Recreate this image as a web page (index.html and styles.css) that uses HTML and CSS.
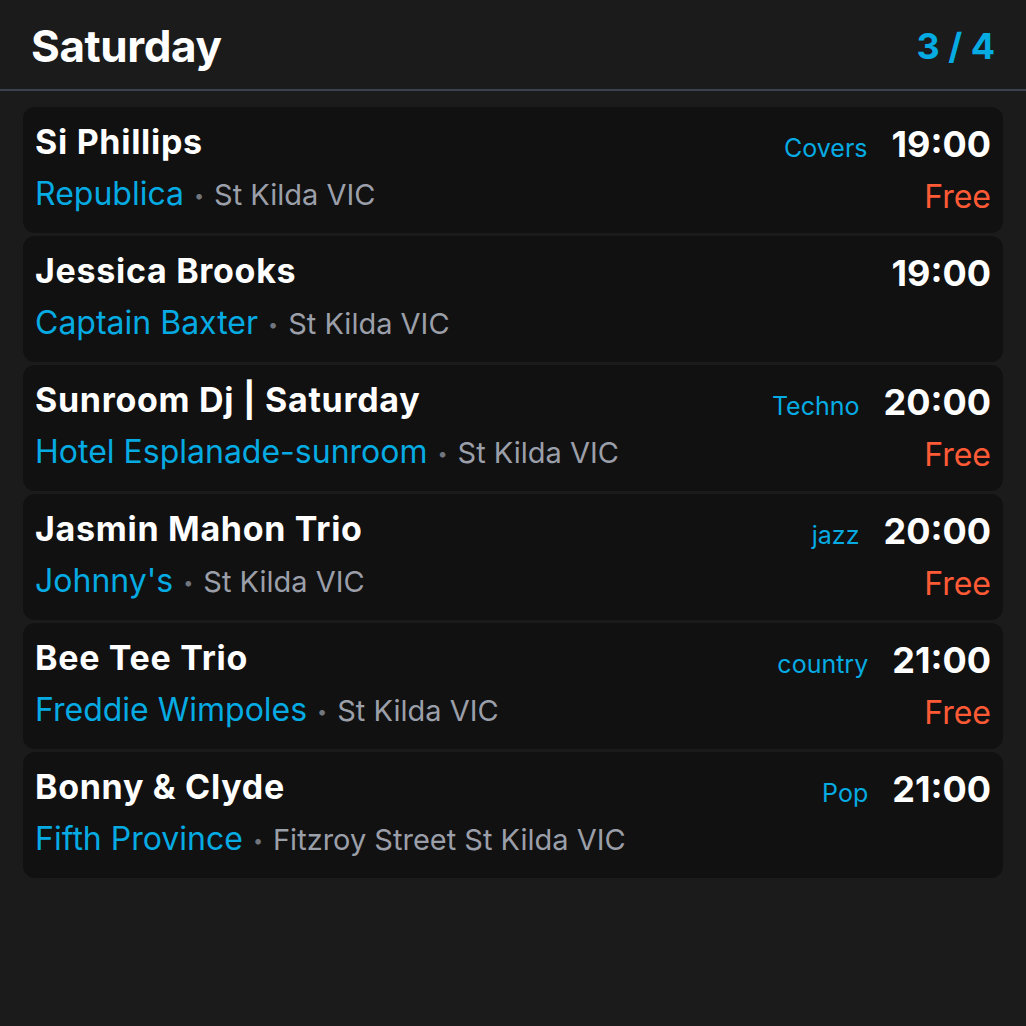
FILE: index.html
```html
<!DOCTYPE html>
<html>
<head>
<meta charset="utf-8">
<link rel="stylesheet" href="styles.css">
</head>
<body>
<header class="header">
  <h1 class="day">Saturday</h1>
  <div class="pager">3 / 4</div>
</header>
<main class="list">
  <div class="card">
    <div class="info">
      <div class="artist">Si Phillips</div>
      <div class="venue-line"><span class="venue">Republica</span><span class="dot">•</span><span class="place">St Kilda VIC</span></div>
    </div>
    <div class="meta">
      <div class="top"><span class="genre">Covers</span><span class="time">19:00</span></div>
      <div class="price">Free</div>
    </div>
  </div>
  <div class="card">
    <div class="info">
      <div class="artist">Jessica Brooks</div>
      <div class="venue-line"><span class="venue">Captain Baxter</span><span class="dot">•</span><span class="place">St Kilda VIC</span></div>
    </div>
    <div class="meta">
      <div class="top"><span class="time">19:00</span></div>
    </div>
  </div>
  <div class="card">
    <div class="info">
      <div class="artist">Sunroom Dj | Saturday</div>
      <div class="venue-line"><span class="venue">Hotel Esplanade-sunroom</span><span class="dot">•</span><span class="place">St Kilda VIC</span></div>
    </div>
    <div class="meta">
      <div class="top"><span class="genre">Techno</span><span class="time">20:00</span></div>
      <div class="price">Free</div>
    </div>
  </div>
  <div class="card">
    <div class="info">
      <div class="artist">Jasmin Mahon Trio</div>
      <div class="venue-line"><span class="venue">Johnny's</span><span class="dot">•</span><span class="place">St Kilda VIC</span></div>
    </div>
    <div class="meta">
      <div class="top"><span class="genre">jazz</span><span class="time">20:00</span></div>
      <div class="price">Free</div>
    </div>
  </div>
  <div class="card">
    <div class="info">
      <div class="artist">Bee Tee Trio</div>
      <div class="venue-line"><span class="venue">Freddie Wimpoles</span><span class="dot">•</span><span class="place">St Kilda VIC</span></div>
    </div>
    <div class="meta">
      <div class="top"><span class="genre">country</span><span class="time">21:00</span></div>
      <div class="price">Free</div>
    </div>
  </div>
  <div class="card">
    <div class="info">
      <div class="artist">Bonny &amp; Clyde</div>
      <div class="venue-line"><span class="venue">Fifth Province</span><span class="dot">•</span><span class="place">Fitzroy Street St Kilda VIC</span></div>
    </div>
    <div class="meta">
      <div class="top"><span class="genre">Pop</span><span class="time">21:00</span></div>
    </div>
  </div>
</main>
</body>
</html>
```
FILE: styles.css
```css
html, body {
  margin: 0;
  padding: 0;
  background: #1b1b1b;
  font-family: Inter, "Noto Sans", "Liberation Sans", sans-serif;
  color: #ffffff;
  height: 100%;
}
.header {
  display: flex;
  align-items: center;
  justify-content: space-between;
  height: 91px;
  padding: 3px 31px 0;
  border-bottom: 2px solid #3b414d;
  box-sizing: border-box;
}
.day {
  margin: 0;
  font-size: 44px;
  font-weight: 700;
  letter-spacing: -0.4px;
}
.pager {
  font-size: 36px;
  font-weight: 700;
  color: #05abe2;
}
.list {
  display: flex;
  flex-direction: column;
  gap: 3px;
  padding: 16px 23px 0;
}
.card {
  display: flex;
  justify-content: space-between;
  align-items: flex-start;
  height: 126px;
  box-sizing: border-box;
  padding: 13px 12px 0;
  background: #111111;
  border-radius: 12px;
}
.info {
  display: flex;
  flex-direction: column;
}
.artist {
  font-size: 34px;
  font-weight: 700;
  line-height: 44px;
  letter-spacing: 0.7px;
}
.venue-line {
  display: flex;
  align-items: baseline;
  line-height: 44px;
  margin-top: 8px;
}
.venue {
  font-size: 32px;
  color: #05abe2;
}
.dot {
  font-size: 18px;
  color: #70757e;
  margin: 0 10px 0 10px;
  position: relative;
  top: -3px;
}
.place {
  font-size: 29px;
  color: #9b9fa9;
}
.meta {
  display: flex;
  flex-direction: column;
  align-items: flex-end;
}
.top {
  display: flex;
  align-items: baseline;
  gap: 24px;
  line-height: 48px;
}
.genre {
  font-size: 25px;
  color: #05abe2;
}
.time {
  font-size: 36px;
  font-weight: 700;
}
.price {
  font-size: 32px;
  color: #ff5a36;
  line-height: 44px;
  margin-top: 3px;
}
```
